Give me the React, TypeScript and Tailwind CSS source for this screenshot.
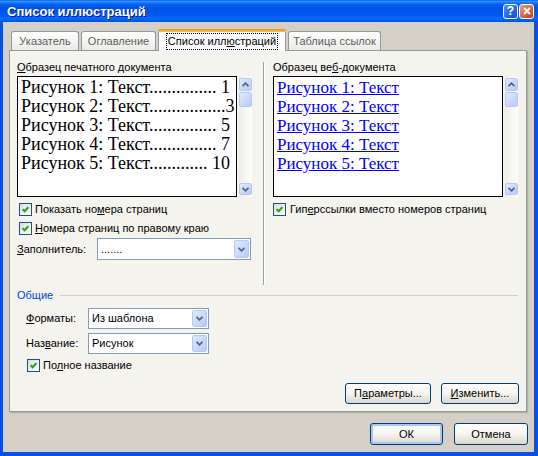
import React from 'react';

const ui = "font-['Liberation_Sans',Arial,sans-serif] text-[11px] leading-[13px] text-black";

function Chevron({ up = false }: { up?: boolean }) {
  return (
    <svg width="7" height="5" viewBox="0 0 7 5" className="block">
      <path
        d={up ? 'M0.5 4.2 L3.5 1.2 L6.5 4.2' : 'M0.5 0.8 L3.5 3.8 L6.5 0.8'}
        fill="none"
        stroke="#4D6185"
        strokeWidth="1.7"
      />
    </svg>
  );
}

function SbBtn({ children, className = '' }: { children?: React.ReactNode; className?: string }) {
  return (
    <div
      className={
        'flex items-center justify-center rounded-[2px] border border-[#B5C8F3] bg-gradient-to-br from-[#E1EAFE] to-[#B7CAF5] ' +
        className
      }
    >
      {children}
    </div>
  );
}

function VScroll() {
  return (
    <div className="w-[13px] flex flex-col pt-[2px] pb-[2px] bg-gradient-to-r from-[#EEEDE5] via-[#F7F6F2] to-[#FDFDFB]">
      <SbBtn className="h-[13px]">
        <Chevron up />
      </SbBtn>
      <SbBtn className="h-[15px] mt-[1px]" />
      <div className="flex-1" />
      <SbBtn className="h-[12px]">
        <Chevron />
      </SbBtn>
    </div>
  );
}

function Combo({ value, className }: { value: string; className: string }) {
  return (
    <div className={'flex border border-[#7F9DB9] bg-white p-[1px] ' + className}>
      <div className="flex-1 flex items-center pl-[2px]">{value}</div>
      <SbBtn className="w-[15px]">
        <Chevron />
      </SbBtn>
    </div>
  );
}

function Check() {
  return (
    <span className="w-[13px] h-[13px] shrink-0 border border-[#1C5180] bg-gradient-to-br from-[#DCDCD7] to-white flex items-center justify-center">
      <svg width="7" height="7" viewBox="0 0 7 7" className="block">
        <path d="M0.6 3.2 L2.6 5.2 L6.4 1.2" fill="none" stroke="#21A121" strokeWidth="2" />
      </svg>
    </span>
  );
}

function XPButton({ children, className, def }: { children: React.ReactNode; className: string; def?: boolean }) {
  return (
    <div
      className={
        'flex items-center justify-center rounded-[3px] border border-[#003C74] bg-gradient-to-b from-white via-[#F5F4EF] to-[#DAD6CA] ' +
        className +
        (def ? ' shadow-[inset_0_0_0_2px_#A9C5F3]' : '')
      }
    >
      {children}
    </div>
  );
}

// figure number, leader dots, page
const printLines: [string, number, string][] = [
  ['1', 15, '1'],
  ['2', 17, '3'],
  ['3', 15, '5'],
  ['4', 15, '7'],
  ['5', 13, '10'],
];

export default function App() {
  return (
    <div className={'w-[538px] h-[456px] flex flex-col bg-[#0850DE] ' + ui}>
      {/* title bar */}
      <div className="h-[22px] shrink-0 flex items-center pl-[7px] pr-[4px] bg-[linear-gradient(to_bottom,#0058EE_0%,#3A93FF_6%,#127DFF_12%,#0262EE_20%,#0057E5_30%,#0054E3_40%,#0055EB_60%,#005BF5_72%,#026AFE_82%,#0062EF_90%,#0052D6_100%)]">
        <span className="flex-1 text-white font-bold text-[13px] [text-shadow:1px_1px_0_#0A1883]">Список иллюстраций</span>
        <div className="w-[15px] h-[15px] rounded-[3px] border border-white bg-gradient-to-br from-[#4A8CF7] to-[#1149D2] flex items-center justify-center text-white font-bold text-[12px] leading-none">
          ?
        </div>
        <div className="ml-[1px] w-[15px] h-[15px] rounded-[3px] border border-white bg-gradient-to-br from-[#EE9A74] to-[#C3390D] flex items-center justify-center">
          <svg width="8" height="8" viewBox="0 0 8 8" className="block">
            <path d="M1 1 L7 7 M7 1 L1 7" stroke="white" strokeWidth="1.8" />
          </svg>
        </div>
      </div>

      {/* body */}
      <div className="flex-1 ml-[3px] mr-[4px] mb-[4px] bg-[#D4D0C8] flex flex-col pl-[6px]">
        {/* tabs */}
        <div className="h-[28px] pt-[7px] flex items-end pl-[2px] gap-[2px]">
          <div className="w-[68px] h-[19px] border border-b-0 border-[#919B9C] rounded-t-[3px] bg-gradient-to-b from-white to-[#ECEBE6] text-[#5E5E5E] flex items-center justify-center">
            Указатель
          </div>
          <div className="w-[75px] h-[19px] border border-b-0 border-[#919B9C] rounded-t-[3px] bg-gradient-to-b from-white to-[#ECEBE6] text-[#5E5E5E] flex items-center justify-center">
            Оглавление
          </div>
          <div className="relative z-10 -mb-[1px] w-[128px] h-[22px] border border-b-0 border-[#919B9C] rounded-t-[3px] bg-[#FCFCFE] flex flex-col">
            <div className="h-[3px] -mx-[1px] -mt-[1px] rounded-t-[3px] bg-gradient-to-b from-[#E68B2C] to-[#FFC73C]" />
            <div className="flex-1 flex items-center justify-center">
              <span className="px-[2px] py-[2px] outline-1 outline-dotted outline-black -outline-offset-1">
                Список илл<span className="underline">ю</span>страций
              </span>
            </div>
          </div>
          <div className="w-[93px] h-[19px] border border-b-0 border-[#919B9C] rounded-t-[3px] bg-gradient-to-b from-white to-[#ECEBE6] text-[#5E5E5E] flex items-center justify-center">
            Таблица ссылок
          </div>
        </div>

        {/* panel */}
        <div className="w-[518px] h-[362px] shrink-0 border border-[#919B9C] bg-[#F4F3EE] shadow-[1px_1px_0_#B3B0A3,2px_2px_0_#C9C6BB] flex flex-col pl-[7px] pr-[8px]">
          <div className="mt-[10px] h-[224px] flex">
            {/* left column */}
            <div className="w-[235px] flex flex-col">
              <div className="h-[13px]">
                <span className="underline">О</span>бразец печатного документа
              </div>
              <div className="mt-[2px] h-[121px] flex gap-[2px]">
                <div className="w-[220px] border border-black bg-white pl-[3px] pr-[6px] pt-[1px] font-['Liberation_Serif','Times_New_Roman',serif] text-[18px] leading-[19px]">
                  {printLines.map(([n, dots, p]) => (
                    <div key={n} className="flex justify-between whitespace-nowrap">
                      <span>
                        Рисунок {n}: Текст{'.'.repeat(dots)}
                      </span>
                      <span>{p}</span>
                    </div>
                  ))}
                </div>
                <VScroll />
              </div>
              <div className="mt-[6px] h-[13px] flex items-center gap-[3px] ml-[2px]">
                <Check />
                <span>
                  Показать но<span className="underline">м</span>ера страниц
                </span>
              </div>
              <div className="mt-[6px] h-[13px] flex items-center gap-[3px] ml-[2px]">
                <Check />
                <span>
                  <span className="underline">Н</span>омера страниц по правому краю
                </span>
              </div>
              <div className="mt-[3px] h-[22px] flex items-center">
                <span className="w-[80px]">
                  <span className="underline">З</span>аполнитель:
                </span>
                <Combo value="......." className="w-[154px] h-[22px]" />
              </div>
            </div>

            {/* divider */}
            <div className="ml-[11px] mt-[1px] flex">
              <div className="w-px bg-[#A0A0A0]" />
              <div className="w-px bg-white" />
            </div>

            {/* right column */}
            <div className="ml-[8px] w-[245px] flex flex-col">
              <div className="h-[13px]">
                Образец ве<span className="underline">б</span>-документа
              </div>
              <div className="mt-[2px] h-[121px] flex gap-[2px]">
                <div className="w-[230px] border border-black bg-white pl-[3px] pt-[1px] font-['Liberation_Serif','Times_New_Roman',serif] text-[17px] leading-[19px] text-[#0000FF]">
                  {printLines.map(([n]) => (
                    <div key={n} className="whitespace-nowrap">
                      <span className="underline">Рисунок {n}: Текст</span>
                    </div>
                  ))}
                </div>
                <VScroll />
              </div>
              <div className="mt-[6px] h-[13px] flex items-center gap-[4px]">
                <Check />
                <span>
                  Гип<span className="underline">е</span>рссылки вместо номеров страниц
                </span>
              </div>
            </div>
          </div>

          {/* group */}
          <div className="mt-[4px] h-[13px] flex items-center">
            <span className="text-[#0046D5]">Общие</span>
            <div className="flex-1 ml-[7px] h-px bg-[#D0D0BF]" />
          </div>
          <div className="mt-[6px] h-[21px] flex items-center pl-[9px]">
            <span className="w-[62px]">
              <span className="underline">Ф</span>орматы:
            </span>
            <Combo value="Из шаблона" className="w-[121px] h-[21px]" />
          </div>
          <div className="mt-[4px] h-[21px] flex items-center pl-[9px]">
            <span className="w-[62px]">
              Наз<span className="underline">в</span>ание:
            </span>
            <Combo value="Рисунок" className="w-[121px] h-[21px]" />
          </div>
          <div className="mt-[5px] h-[13px] flex items-center gap-[3px] ml-[10px]">
            <Check />
            <span>
              По<span className="underline">л</span>ное название
            </span>
          </div>
          <div className="mt-[11px] h-[21px] flex justify-end gap-[10px] -mr-[1px]">
            <XPButton className="w-[86px]">
              <span>
                П<span className="underline">а</span>раметры...
              </span>
            </XPButton>
            <XPButton className="w-[78px]">
              <span>
                <span className="underline">И</span>зменить...
              </span>
            </XPButton>
          </div>
        </div>

        {/* dialog buttons */}
        <div className="mt-[11px] h-[22px] flex justify-end gap-[11px] pr-[6px]">
          <XPButton className="w-[73px]" def>
            ОК
          </XPButton>
          <XPButton className="w-[74px]">Отмена</XPButton>
        </div>
      </div>
    </div>
  );
}
